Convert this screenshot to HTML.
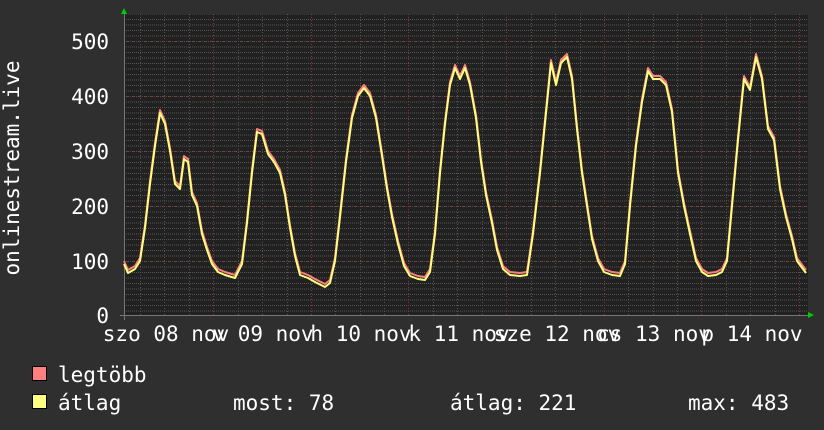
<!DOCTYPE html>
<html><head><meta charset="utf-8"><style>
body{margin:0;background:#2f2f2f;width:824px;height:430px;overflow:hidden}
svg{display:block}
text{font-family:"DejaVu Sans Mono","Liberation Mono",monospace;fill:#fff}
</style></head><body>
<svg width="824" height="430" viewBox="0 0 824 430">
<defs>
<pattern id="hmin" x="0" y="316" width="10" height="5.5" patternUnits="userSpaceOnUse">
<line x1="0" y1="0.5" x2="10" y2="0.5" stroke="#555" stroke-width="1" stroke-dasharray="1,1"/>
</pattern>
</defs>
<rect x="124" y="14" width="684" height="302" fill="#212121"/>
<rect x="124" y="14" width="684" height="302" fill="url(#hmin)"/>
<g stroke="#555" stroke-dasharray="1,2" stroke-width="1">
<line x1="140.5" y1="14" x2="140.5" y2="316"/>
<line x1="164.5" y1="14" x2="164.5" y2="316"/>
<line x1="189.5" y1="14" x2="189.5" y2="316"/>
<line x1="238.5" y1="14" x2="238.5" y2="316"/>
<line x1="262.5" y1="14" x2="262.5" y2="316"/>
<line x1="287.5" y1="14" x2="287.5" y2="316"/>
<line x1="335.5" y1="14" x2="335.5" y2="316"/>
<line x1="360.5" y1="14" x2="360.5" y2="316"/>
<line x1="384.5" y1="14" x2="384.5" y2="316"/>
<line x1="433.5" y1="14" x2="433.5" y2="316"/>
<line x1="457.5" y1="14" x2="457.5" y2="316"/>
<line x1="482.5" y1="14" x2="482.5" y2="316"/>
<line x1="531.5" y1="14" x2="531.5" y2="316"/>
<line x1="555.5" y1="14" x2="555.5" y2="316"/>
<line x1="580.5" y1="14" x2="580.5" y2="316"/>
<line x1="628.5" y1="14" x2="628.5" y2="316"/>
<line x1="653.5" y1="14" x2="653.5" y2="316"/>
<line x1="677.5" y1="14" x2="677.5" y2="316"/>
<line x1="726.5" y1="14" x2="726.5" y2="316"/>
<line x1="750.5" y1="14" x2="750.5" y2="316"/>
<line x1="775.5" y1="14" x2="775.5" y2="316"/>
</g>
<g stroke="#7a3a3a" stroke-dasharray="1,2" stroke-width="1">
<line x1="213.5" y1="14" x2="213.5" y2="316"/>
<line x1="311.5" y1="14" x2="311.5" y2="316"/>
<line x1="408.5" y1="14" x2="408.5" y2="316"/>
<line x1="506.5" y1="14" x2="506.5" y2="316"/>
<line x1="604.5" y1="14" x2="604.5" y2="316"/>
<line x1="701.5" y1="14" x2="701.5" y2="316"/>
<line x1="799.5" y1="14" x2="799.5" y2="316"/>
<line x1="124" y1="261.5" x2="808" y2="261.5"/>
<line x1="124" y1="206.5" x2="808" y2="206.5"/>
<line x1="124" y1="151.5" x2="808" y2="151.5"/>
<line x1="124" y1="96.5" x2="808" y2="96.5"/>
<line x1="124" y1="41.5" x2="808" y2="41.5"/>
</g>
<line x1="124.5" y1="10" x2="124.5" y2="320" stroke="#777"/>
<line x1="120" y1="315.5" x2="812" y2="315.5" stroke="#777"/>
<polygon points="121,14 127,14 124,8" fill="#0c0"/>
<polygon points="808,312 808,318 814,315" fill="#0c0"/>
<g fill="none" stroke-width="2" stroke-linejoin="round">
<polyline transform="translate(0,-3)" stroke="#ff7f7f" points="124,264 128,273 135,269 140,261 145,228 150,184 155,146 160,113 165,124 170,151 175,184 180,189 184,159 188,162 192,195 197,206 202,234 207,250 212,264 218,272 225,275 235,278 242,264 247,223 252,173 257,132 262,134 268,154 274,162 280,173 285,195 290,228 295,256 300,275 308,278 315,282 325,287 330,283 335,261 340,217 346,162 352,118 358,96 364,88 370,96 376,118 382,156 387,189 392,217 398,244 404,266 410,276 418,279 425,280 430,272 435,234 440,173 445,124 450,85 455,68 460,79 465,68 470,85 476,118 481,162 486,195 492,223 497,250 503,269 510,275 520,276 527,275 533,234 540,173 546,113 551,63 556,85 561,63 567,57 572,79 577,129 582,173 587,206 592,239 598,261 604,272 612,275 620,276 625,264 630,206 636,146 642,102 648,71 653,79 660,79 666,85 672,112 678,173 684,206 690,234 696,261 702,272 708,276 716,275 722,272 727,261 732,206 738,140 744,79 750,90 756,57 762,79 768,129 774,140 780,189 786,217 792,239 797,261 803,269 806,273"/>
<polyline stroke="#ffff7f" points="124,264 128,273 135,269 140,261 145,228 150,184 155,146 160,113 165,124 170,151 175,184 180,189 184,159 188,162 192,195 197,206 202,234 207,250 212,264 218,272 225,275 235,278 242,264 247,223 252,173 257,132 262,134 268,154 274,162 280,173 285,195 290,228 295,256 300,275 308,278 315,282 325,287 330,283 335,261 340,217 346,162 352,118 358,96 364,88 370,96 376,118 382,156 387,189 392,217 398,244 404,266 410,276 418,279 425,280 430,272 435,234 440,173 445,124 450,85 455,68 460,79 465,68 470,85 476,118 481,162 486,195 492,223 497,250 503,269 510,275 520,276 527,275 533,234 540,173 546,113 551,63 556,85 561,63 567,57 572,79 577,129 582,173 587,206 592,239 598,261 604,272 612,275 620,276 625,264 630,206 636,146 642,102 648,71 653,79 660,79 666,85 672,112 678,173 684,206 690,234 696,261 702,272 708,276 716,275 722,272 727,261 732,206 738,140 744,79 750,90 756,57 762,79 768,129 774,140 780,189 786,217 792,239 797,261 803,269 806,273"/>
</g>
<g font-size="21" text-anchor="end">
<text x="109" y="49">500</text>
<text x="109" y="104">400</text>
<text x="109" y="159">300</text>
<text x="109" y="214">200</text>
<text x="109" y="269">100</text>
<text x="109" y="323">0</text>
</g>
<g font-size="21" text-anchor="middle">
<text x="166" y="341">szo 08 nov</text>
<text x="263" y="341">v 09 nov</text>
<text x="361" y="341">h 10 nov</text>
<text x="459" y="341">k 11 nov</text>
<text x="557" y="341">sze 12 nov</text>
<text x="654" y="341">cs 13 nov</text>
<text x="752" y="341">p 14 nov</text>
</g>
<text font-size="21" transform="translate(19,168) rotate(-90)" text-anchor="middle">onlinestream.live</text>
<rect x="32.5" y="366.5" width="14" height="14" fill="#ff7f7f" stroke="#000"/>
<rect x="32.5" y="394.5" width="14" height="14" fill="#ffff7f" stroke="#000"/>
<g font-size="21">
<text x="58" y="382">legtöbb</text>
<text x="58" y="410">átlag</text>
<text x="233" y="410">most: 78</text>
<text x="450" y="410">átlag: 221</text>
<text x="688" y="410">max: 483</text>
</g>
</svg>
</body></html>
